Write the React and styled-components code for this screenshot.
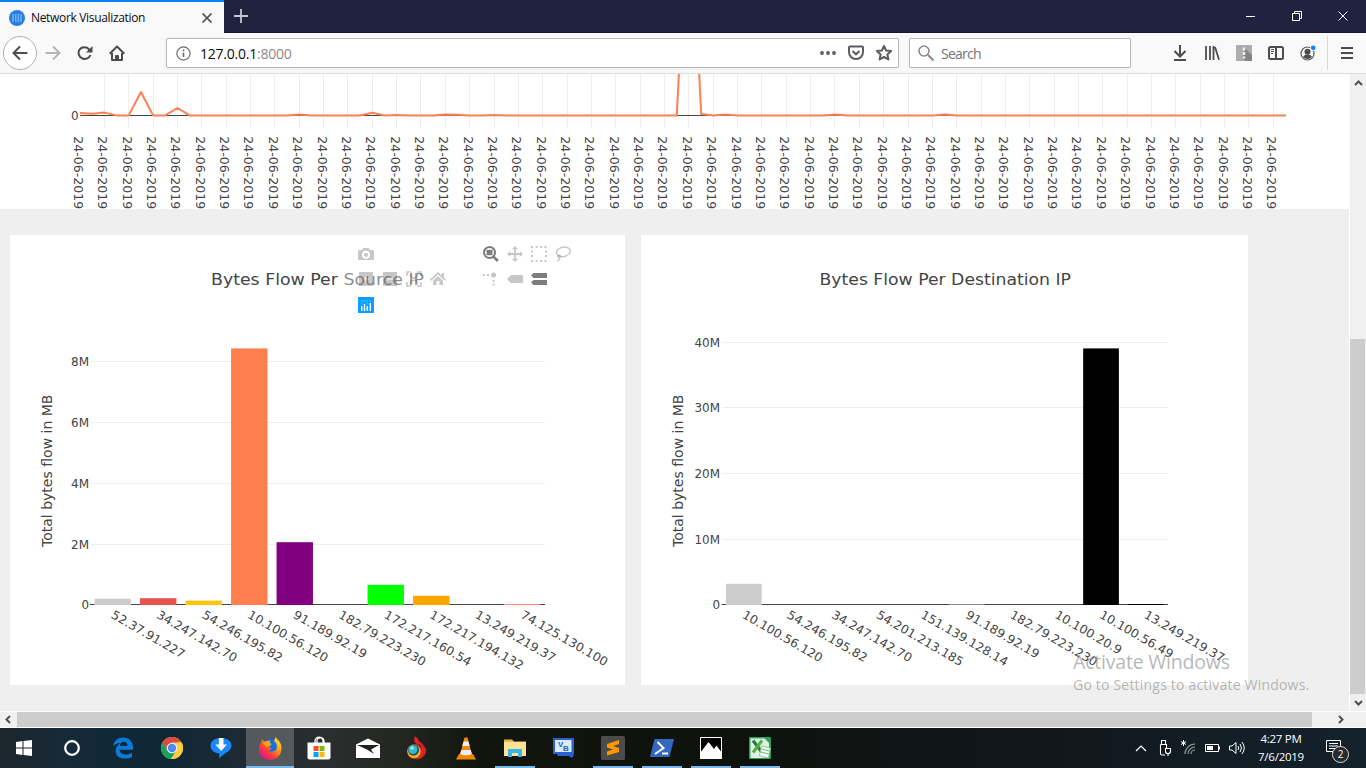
import React from "react";
import styled, { createGlobalStyle } from "styled-components";

const GlobalStyle = createGlobalStyle`
  * { box-sizing: border-box; }
  html, body { margin: 0; padding: 0; overflow: hidden; }
  svg { display: block; flex: none; }
`;

const ui = `"Open Sans", "Noto Sans", "Liberation Sans", sans-serif`;
const chartFont = `"DejaVu Sans", sans-serif`;

const Screen = styled.div`
  position: relative;
  width: 1366px;
  height: 768px;
  display: flex;
  flex-direction: column;
  background: #efefef;
  font-family: ${ui};
  overflow: hidden;
`;

/* ---------- browser chrome ---------- */

const TitleBar = styled.div`
  height: 33px;
  display: flex;
  background: #202340;
  border-bottom: 1px solid #14162c;
`;

const Tab = styled.div`
  width: 224px;
  height: 33px;
  display: flex;
  align-items: center;
  padding: 0 10px 0 9px;
  background: #f9f9fa;
  border-top: 2px solid #0a84ff;
`;

const TabTitle = styled.span`
  flex: 1;
  margin-left: 6px;
  font-size: 12px;
  letter-spacing: -0.33px;
  color: #0c0c0d;
  white-space: nowrap;
`;

const NewTab = styled.div`
  padding: 9px 0 0 10px;
  flex: 1;
`;

const WindowButtons = styled.div`
  display: flex;
  align-items: center;
`;

const WindowButton = styled.div`
  width: 46px;
  display: flex;
  justify-content: center;
`;

const Toolbar = styled.div`
  height: 41px;
  display: flex;
  align-items: center;
  background: #f9f9fa;
  border-bottom: 1px solid #dcdcde;
  padding-left: 3px;
`;

const BackButton = styled.div`
  width: 34px;
  height: 34px;
  border: 1px solid #b1b1b3;
  border-radius: 50%;
  background: #fff;
  display: flex;
  align-items: center;
  justify-content: center;
`;

const ToolIcon = styled.div`
  width: ${(p) => p.$w || 32}px;
  display: flex;
  justify-content: center;
`;

const ToolGroup = styled.div`
  display: flex;
  align-items: center;
  margin-left: 33px;
`;

const Field = styled.div`
  width: ${(p) => p.$w}px;
  height: 30px;
  margin-left: ${(p) => p.$ml}px;
  padding: 0 0 0 ${(p) => p.$pl}px;
  display: flex;
  align-items: center;
  background: #fff;
  border: 1px solid #b9b9bb;
  border-radius: 2px;
  box-shadow: 0 1px 4px rgba(0, 0, 0, 0.05);
`;

const FieldText = styled.span`
  flex: 1;
  margin-left: ${(p) => p.$ml}px;
  font-size: 14px;
  letter-spacing: ${(p) => p.$ls}px;
  color: ${(p) => p.$color};
  white-space: nowrap;
`;

const Port = styled.span`
  color: #8a8a8c;
`;

const Divider = styled.div`
  width: 1px;
  height: 34px;
  margin-left: 3px;
  background: #d7d7db;
`;

/* ---------- page ---------- */

const PageRow = styled.div`
  height: 637px;
  display: flex;
`;

const Page = styled.div`
  width: 1349px;
  height: 637px;
  overflow: hidden;
  background: #efefef;
`;

const TimelinePanel = styled.div`
  height: 135px;
  background: #fff;
  overflow: hidden;
`;

const Panels = styled.div`
  display: flex;
  gap: 16px;
  padding: 26px 0 0 10px;
`;

const Panel = styled.div`
  position: relative;
  width: ${(p) => p.$w}px;
  height: 450px;
  background: #fff;
`;

const ChartText = styled.text.attrs({ lengthAdjust: "spacingAndGlyphs" })`
  font-family: ${chartFont};
  font-size: ${(p) => p.$size || 12}px;
  fill: #444;
`;

const ModeBar = styled.div`
  position: absolute;
  left: 334px;
  top: 6px;
  width: 233px;
  display: flex;
  justify-content: space-between;
  padding-left: 10px;
  background: rgba(255, 255, 255, 0.4);
`;

const ModeGroup = styled.div`
  width: 98px;
`;

const ModeRow = styled.div`
  display: flex;
  height: 25.5px;
`;

const ModeIcon = styled.div`
  width: 24px;
  display: flex;
  align-items: center;
  justify-content: center;
  color: ${(p) => (p.$active ? "rgba(68, 68, 68, 0.7)" : "rgba(68, 68, 68, 0.3)")};
`;

const VScroll = styled.div`
  width: 17px;
  height: 637px;
  display: flex;
  flex-direction: column;
  align-items: center;
  background: #f0f0f0;
  border-left: 1px solid #fff;
  padding-top: 6px;
`;

const VThumb = styled.div`
  width: 15px;
  height: 355px;
  margin: 253px 1px 6px 0;
  background: #cdcdcd;
`;

const HScroll = styled.div`
  height: 17px;
  display: flex;
  align-items: center;
  background: #f0f0f0;
  border-top: 1px solid #fff;
  border-bottom: 1px solid #fff;
  padding-left: 4px;
`;

const HThumb = styled.div`
  width: 1295px;
  height: 15px;
  margin: 0 25px 0 5px;
  background: #cdcdcd;
`;

const Watermark = styled.div`
  position: absolute;
  left: 1073px;
  top: 649px;
  color: rgba(145, 145, 145, 0.66);
  white-space: nowrap;
`;

const WatermarkTitle = styled.div`
  font-size: 19.5px;
  line-height: 25px;
  letter-spacing: -0.2px;
`;

const WatermarkText = styled.div`
  font-size: 14px;
  line-height: 22px;
  letter-spacing: 0.2px;
`;

/* ---------- taskbar ---------- */

const Taskbar = styled.div`
  height: 40px;
  display: flex;
  background: linear-gradient(90deg, #1d262c 0, #152a38 70px, #0e2636 150px, #1c2a33 240px, #2a2e2e 330px, #242620 400px, #12150e 480px, #0e120c 720px, #10161a 1000px, #14222c 1366px);
`;

const Apps = styled.div`
  display: flex;
  margin-left: 2px;
`;

const Slot = styled.div`
  width: ${(p) => p.$w || 49}px;
  height: 40px;
  display: flex;
  align-items: center;
  justify-content: center;
  background: ${(p) => (p.$open ? "linear-gradient(#76b9ed, #76b9ed) center bottom / 40px 2px no-repeat" : "none")};
`;

const ActiveSlot = styled(Slot)`
  width: 48px;
  margin-left: 1px;
  background: #53595c;
  border-bottom: 2px solid #76b9ed;
  padding-top: 2px;
`;

const Tray = styled.div`
  display: flex;
  align-items: center;
  margin-left: auto;
  color: #fff;
`;

const TrayIcon = styled.div`
  width: 24px;
  display: flex;
  justify-content: center;
`;

const Clock = styled.div`
  width: 64px;
  margin-right: -1px;
  text-align: center;
  font-size: 11.5px;
  line-height: 18px;
  letter-spacing: -0.25px;
  white-space: nowrap;
`;

const Notice = styled.div`
  position: relative;
  width: 54px;
  height: 40px;
  padding: 12px 0 0 14px;
`;

const Badge = styled.div`
  position: absolute;
  left: 20px;
  top: 18px;
  width: 17px;
  height: 17px;
  border-radius: 50%;
  background: #252b2e;
  border: 1px solid #d5d5d5;
  font-size: 10px;
  line-height: 15px;
  text-align: center;
`;

/* ---------- charts ---------- */

const verdanaWidth = (s) =>
  [...s].reduce((w, c) => w + (c === "." ? 4.45 : 7.7), 0);

const bumps = { 0: 113, 1: 113.8, 2: 112.6, 5: 92, 8: 108, 18: 114.6, 24: 112.8, 26: 114.9, 30: 114.5, 31: 114.8, 34: 114.9, 50: -131, 51: 114, 53: 114.4, 62: 114.4, 71: 114.5 };

function Timeline() {
  const points = Array.from({ length: 100 }, (_, i) => `${80 + i * 12.18},${bumps[i] ?? 115.4}`).join(" ");
  return (
    <svg width="1349" height="135" viewBox="0 74 1349 135">
      {Array.from({ length: 49 }, (_, i) => (
        <rect key={i} x={Math.round(80 + (i + 1) * 24.353 - 0.5)} y="74" width="1" height="55" fill="#eee" />
      ))}
      <rect x="80" y="115" width="1206" height="1" fill="#444" />
      <polyline points={points} fill="none" stroke="coral" strokeWidth="2" strokeLinejoin="round" />
      <ChartText x="71" y="120">0</ChartText>
      {Array.from({ length: 50 }, (_, i) => (
        <ChartText key={i} textLength="73" transform={`translate(${Math.round(80 + i * 24.353) - 6.5},136.200) rotate(90)`}>
          24-06-2019
        </ChartText>
      ))}
    </svg>
  );
}

const sources = [
  ["52.37.91.227", 598.7, "#ccc"],
  ["34.247.142.70", 598.2, "#e55451"],
  ["54.246.195.82", 600.6, "#fdc60b"],
  ["10.100.56.120", 348.4, "#ff7f50"],
  ["91.189.92.19", 542.2, "purple"],
  ["182.79.223.230"],
  ["172.217.160.54", 584.8, "lime"],
  ["172.217.194.132", 595.8, "orange"],
  ["13.249.219.37"],
  ["74.125.130.100", 604, "#fa8072"],
];

const destinations = [
  ["10.100.56.120", 583.8, "#ccc"],
  ["54.246.195.82"],
  ["34.247.142.70"],
  ["54.201.213.185"],
  ["151.139.128.14"],
  ["91.189.92.19", 604, "#888"],
  ["182.79.223.230"],
  ["10.100.20.9"],
  ["10.100.56.49", 348.4, "#000"],
  ["13.249.219.37", 604, "#000"],
];

function BarChart({ left, width, x0, x1, title, titleX, titleW, labelX, axisX, ticks, bars }) {
  const pitch = (x1 - x0) / bars.length;
  return (
    <svg width={width} height="450" viewBox={`${left} 235 ${width} 450`}>
      {ticks.map(([label, y, w]) => (
        <g key={label}>
          {label !== "0" && <rect x={x0 + 1} y={y} width={x1 - x0 - 1} height="1" fill="#eee" />}
          <ChartText x={labelX - w} y={y + 4.7} textLength={w}>{label}</ChartText>
        </g>
      ))}
      <rect x={x0} y="604" width={x1 - x0} height="1" fill="#444" />
      {bars.map(([ip, top, fill], i) => (
        <g key={ip}>
          {top && <rect x={x0 + pitch * (i + 0.1)} y={top} width={pitch * 0.8} height={605 - top} fill={fill} />}
          <ChartText textLength={verdanaWidth(ip)} transform={`translate(${x0 + pitch * (i + 0.5) - 2.4},617.3) rotate(30)`}>
            {ip}
          </ChartText>
        </g>
      ))}
      <ChartText $size={16.5} x={titleX} y="285" textLength={titleW}>{title}</ChartText>
      <ChartText $size={14} textLength="152.500" transform={`translate(${axisX},547) rotate(-90)`}>
        Total bytes flow in MB
      </ChartText>
    </svg>
  );
}

const modeGlyphs = {
  camera: <path fillRule="evenodd" d="M1 4h3l1.500-2h5L12 4h3q1 0 1 1v8q0 1-1 1H1q-1 0-1-1V5q0-1 1-1zm7 .8a4 4 0 100 8 4 4 0 000-8zm0 1.900a2.100 2.100 0 110 4.200 2.100 2.100 0 010-4.200z" />,
  zoom: <g><path fillRule="evenodd" d="M6.500 0a6.500 6.500 0 015.300 10.200l4 3.800-1.800 2-4-4A6.500 6.500 0 116.500 0zm0 2a4.500 4.500 0 100 9 4.500 4.500 0 000-9z" /><path d="M3.500 3.800h6v5.400h-6z" /></g>,
  pan: <path d="M8 0l3 3.200H8.900V7.100h3.900V5L16 8l-3.200 3V8.900H8.900v3.900H11L8 16l-3-3.200h2.100V8.900H3.200V11L0 8l3.200-3v2.100h3.900V3.200H5z" />,
  select: <path fill="none" stroke="currentColor" strokeWidth="2" strokeDasharray="2 2.500" d="M0 1h16M0 15h16M1 4.500v8M15 4.500v8" />,
  lasso: <g fill="none" stroke="currentColor" strokeWidth="1.400"><ellipse cx="8.500" cy="6" rx="7" ry="4.700" transform="rotate(-12 8 6)" /><path d="M3 9c-1 2 1 3 2 2s0-2-1-1.500M4.500 11.500c.5 2-1 3-2.500 3.500" /></g>,
  zoomIn: <path fillRule="evenodd" d="M1 1h14v14H1zM7.500 5v2.500H5v1h2.500V11h1V8.500H11v-1H8.500V5z" />,
  zoomOut: <path fillRule="evenodd" d="M1 1h14v14H1zM5 7.500v1h6v-1z" />,
  auto: <path fill="none" stroke="currentColor" strokeWidth="1.600" d="M1 5V1h4M11 1h4v4M15 11v4h-4M5 15H1v-4M4 4l8 8M12 4l-8 8" />,
  home: <path d="M8 1l3.700 3.500V2H14v4.700L16 8.600l-1.200 1.200L8 3.400 1.200 9.800 0 8.600zM8 5l5 4.700V14H9.500v-4h-3v4H3V9.700z" />,
  spike: <g><circle cx="10.500" cy="4" r="2.500" /><path d="M0 3h2v2H0zM4 3h2v2H4zM9.500 9h2v2h-2zM9.500 12.500h2v2h-2z" /></g>,
  closest: <path d="M0 8l4-4h11q1 0 1 1v6q0 1-1 1H4z" />,
  compare: <path d="M0 4.500L2.500 2H16v5H2.500zM0 11.500L2.500 9H16v5H2.500z" />,
};

const Glyph = ({ name, active }) => (
  <ModeIcon $active={active}>
    <svg width="16" height="16" viewBox="0 0 16 16" fill="currentColor">{modeGlyphs[name]}</svg>
  </ModeIcon>
);

function PlotModeBar() {
  return (
    <ModeBar>
      <ModeGroup>
        <ModeRow><Glyph name="camera" /></ModeRow>
        <ModeRow><Glyph name="zoomIn" /><Glyph name="zoomOut" /><Glyph name="auto" /><Glyph name="home" /></ModeRow>
        <ModeRow>
          <ModeIcon>
            <svg width="16" height="16" viewBox="0 0 16 16">
              <path fill="#119dff" d="M0 0h16v16H0z" />
              <path stroke="#fff" strokeWidth="1.400" d="M3.700 9v5M6.500 7v7M9.300 9v5M12.300 6v8" />
              <path stroke="#19d3f3" strokeWidth="1.400" strokeDasharray="1.400 1.200" d="M3.700 3v4M6.500 3v3M9.300 3v4M12.300 3v2" />
            </svg>
          </ModeIcon>
        </ModeRow>
      </ModeGroup>
      <ModeGroup>
        <ModeRow><Glyph name="zoom" active /><Glyph name="pan" /><Glyph name="select" /><Glyph name="lasso" /></ModeRow>
        <ModeRow><Glyph name="spike" /><Glyph name="closest" /><Glyph name="compare" active /></ModeRow>
      </ModeGroup>
    </ModeBar>
  );
}

/* ---------- icons ---------- */

const Line = ({ w = 16, h = w, box, color = "#4c4c4f", sw = 2, d, children, ...rest }) => (
  <svg width={w} height={h} viewBox={box || `0 0 ${w} ${h}`} fill="none" stroke={color} strokeWidth={sw} {...rest}>
    {d && <path d={d} />}
    {children}
  </svg>
);

const apps = [
  {
    id: "edge",
    icon: (
      <svg width="22" height="22" viewBox="0 0 22 22">
        <path fill="#0a7bd8" d="M1 9.500C2 3.500 6 .5 11 .5c6 0 10 4 10 10v2.300H7.600c.2 3.200 2.500 4.700 6 4.700 2.500 0 4.500-.7 6.400-1.800v4.400c-2 1-4.500 1.500-7.300 1.500C7 21.600 3.600 18.500 3.600 14c0-3.600 2-6.300 5-8C5 6 2.500 7.500 1 9.500zM7.700 9h7.800c0-2.700-1.400-4.200-3.800-4.200C9.500 4.800 8 6.500 7.700 9z" />
      </svg>
    ),
  },
  {
    id: "chrome",
    icon: (
      <svg width="22" height="22" viewBox="0 0 22 22">
        <circle cx="11" cy="11" r="11" fill="#ffcd42" />
        <path fill="#dd4b3e" d="M1.500 5.500A11 11 0 0120.500 5.500H11l-4.700 8z" />
        <path fill="#16a15f" d="M1.500 5.500A11 11 0 0010 22l5.500-8.500L11 16l-4.700-2.500z" />
        <path fill="#ffcd42" d="M20.500 5.500A11 11 0 0110 22l5.700-8.500L16 5.500z" />
        <circle cx="11" cy="11" r="5.300" fill="#f4f4f4" />
        <circle cx="11" cy="11" r="4.200" fill="#4a8af4" />
      </svg>
    ),
  },
  {
    id: "downloader",
    icon: (
      <svg width="22" height="22" viewBox="0 0 22 22">
        <path fill="#1788fb" d="M11 1c6 0 10.500 3 10.500 7.500 0 4-4 6.500-6 7.500-2 1.500-4 3-6.500 5.500l.5-5C4 16 .5 13 .5 8.500S5 1 11 1z" />
        <path fill="#fff" d="M8.800 1h4.700v6.500h3.500L11.200 14 5.300 7.500h3.500z" />
      </svg>
    ),
  },
  {
    id: "firefox",
    active: true,
    icon: (
      <svg width="23" height="23" viewBox="0 0 23 23">
        <defs>
          <linearGradient id="fox" x1=".9" y1=".1" x2=".2" y2=".9">
            <stop offset="0" stopColor="#ffe226" /><stop offset=".35" stopColor="#ff9a16" />
            <stop offset=".7" stopColor="#ff3b3c" /><stop offset="1" stopColor="#e31587" />
          </linearGradient>
        </defs>
        <circle cx="12" cy="10.500" r="8.500" fill="#1a6fe0" />
        <path fill="url(#fox)" d="M3 2l2.500 3C7 3.500 9 4 9.500 4L11 3l-.5 3 2 1c.5 1-2 1.500-2 2.500-.5 1.500 1 2 2.500 1.500-1 2-3 2.500-4 2 1.500 2.500 7 2.500 8.500-1 1-3 0-6-2.500-8C16 3 16 1 16.500 0c1 2 3 3 4.500 5.500 3.500 6 1 17-9.500 17.500C3 23 0 17 0 12.500 0 9 1 7 2 6z" />
        <path fill="#ffb30f" d="M4 6c2-2 4-2 5.500-2L11 3l-.5 3 2 1c0 1-2 1-2 2l-3 1z" opacity=".7" />
      </svg>
    ),
  },
  {
    id: "store",
    icon: (
      <svg width="24" height="24" viewBox="0 0 24 24">
        <path fill="none" stroke="#fff" strokeWidth="1.300" d="M8 8V5c0-5 8-5 8 0v3M10 7V4.500c0-3.500 7-3.500 7 .5v2" />
        <path fill="#fff" d="M.5 6.500h23v15q0 2-2 2h-19q-2 0-2-2z" />
        <path fill="#f25022" d="M6.500 10h5v5h-5z" /><path fill="#7fba00" d="M12.500 10h5v5h-5z" />
        <path fill="#00a4ef" d="M6.500 16h5v5h-5z" /><path fill="#ffb900" d="M12.500 16h5v5h-5z" />
      </svg>
    ),
  },
  {
    id: "mail",
    icon: (
      <svg width="24" height="20" viewBox="0 0 24 20">
        <path fill="#fff" d="M0 6.500L12 .5l12 6V20H0z" />
        <path fill="#20231f" d="M1 7h22l-8 4.500 3 4.500-6.500-4.200z" />
      </svg>
    ),
  },
  {
    id: "torch",
    icon: (
      <svg width="22" height="24" viewBox="0 0 22 24">
        <path fill="#e01f26" d="M9 .5c-1.500 3 0 4.500 3 6 3 2 4 6 3 9.500-1 4-3 6-5 7.500 5 0 10-3.500 10-9 0-4-4-6-7-8.500C11 4 12 2 9 .5z" />
        <path fill="#e01f26" d="M9 .5c-1.500 3-1 6 2 8l7 1c-2-3-6-4-6-7z" />
        <circle cx="8.500" cy="15.500" r="7.500" fill="#c93a26" /><circle cx="8" cy="15.500" r="6.600" fill="#f0b02b" />
        <circle cx="7.500" cy="14" r="5.500" fill="#174f58" /><circle cx="7" cy="13.500" r="4.500" fill="#35b9cb" />
        <circle cx="6" cy="12" r="1.700" fill="#a9e9ee" />
      </svg>
    ),
  },
  {
    id: "vlc",
    icon: (
      <svg width="20" height="23" viewBox="0 0 20 23">
        <path fill="#f18500" d="M3 17h14l3 5.500H0z" />
        <path fill="#f28a12" d="M8.500.5h3L16 18q-6 3-12 0z" />
        <path fill="#eee" d="M7.500 4.500h5l1.200 4.500H6.300zM5.300 13h9.400l1.200 4q-6 2.500-11.800 0z" />
      </svg>
    ),
  },
  {
    id: "explorer",
    open: true,
    icon: (
      <svg width="22" height="20" viewBox="0 0 22 20">
        <path fill="#e8b647" d="M0 1.500h8l2 2h12v3H0z" />
        <path fill="#ffe394" d="M0 4h22v14H0z" />
        <path fill="#39b6e9" d="M4 12q0-1 1-1h12q1 0 1 1v7h-4v-4H8v4H4z" />
      </svg>
    ),
  },
  {
    id: "vb",
    icon: (
      <svg width="22" height="20" viewBox="0 0 22 20">
        <path fill="#2862cf" d="M0 0h21v16H0zM18 14l3 3-2 3-3-2H5l-1-2h14z" />
        <path fill="#dbe9f9" d="M2 2h16.500v12H2z" />
        <text x="5" y="9" fontSize="8" fontWeight="700" fontFamily="Liberation Sans" fill="#1c62ae">V</text>
        <text x="10" y="12.500" fontSize="8" fontWeight="700" fontFamily="Liberation Sans" fill="#1c62ae">B</text>
      </svg>
    ),
  },
  {
    id: "sublime",
    open: true,
    icon: (
      <svg width="24" height="24" viewBox="0 0 24 24">
        <rect width="24" height="24" rx="1.500" fill="#4b4b4b" />
        <path fill="#ff9800" d="M6 8l12-4v4l-6 2 6 2v4L6 19.500v-4l6-2-6-2z" />
      </svg>
    ),
  },
  {
    id: "powershell",
    open: true,
    icon: (
      <svg width="24" height="18" viewBox="0 0 24 18">
        <path fill="#3467bf" d="M4.500 0H24l-4.500 18H0z" />
        <path fill="none" stroke="#fff" strokeWidth="2" d="M7.500 3l6 6L5 15M12 14.500h6" />
      </svg>
    ),
  },
  {
    id: "photos",
    open: true,
    icon: (
      <svg width="22" height="22" viewBox="0 0 22 22">
        <path fill="#000" stroke="#fff" d="M.5.500h21v21H.5z" />
        <path fill="#fff" d="M0 16L8.500 5l5.500 7 2.500-3.500L22 16v6H0z" />
      </svg>
    ),
  },
  {
    id: "excel",
    open: true,
    icon: (
      <svg width="22" height="22" viewBox="0 0 22 22">
        <rect width="22" height="22" rx="1" fill="#2f9e58" />
        <path fill="#dff1e0" d="M1.500 1.500h14L20 6v15H1.500z" />
        <path stroke="#257a3c" strokeWidth="3" d="M4 3.500l9 12" /><path stroke="#55ad45" strokeWidth="3" d="M13 3.500l-9 12" />
        <path fill="#f4faf4" stroke="#7fb98f" strokeWidth=".8" d="M12.500 9l9 2-2 10-9-2z" />
        <path stroke="#4ca468" strokeWidth=".8" d="M12.500 12l8 2M12 15l8 2" />
      </svg>
    ),
  },
];

export default function App() {
  return (
    <Screen>
      <GlobalStyle />
      <TitleBar>
        <Tab>
          <svg width="16" height="16" viewBox="0 0 16 16">
            <circle cx="8" cy="8" r="8" fill="#2480e5" />
            <path stroke="#75b0ee" strokeWidth="1.500" d="M4 4v8M6.700 4v8M9.400 4v8M12 4v8" />
          </svg>
          <TabTitle>Network Visualization</TabTitle>
          <Line w={14} d="M2.500 2.500l9 9M11.500 2.500l-9 9" sw={1.700} />
        </Tab>
        <NewTab><Line w={14} d="M7 0v14M0 7h14" color="#c5c6d2" sw={1.800} /></NewTab>
        <WindowButtons>
          <WindowButton><Line w={10} d="M0 5.500h9" color="#fff" sw={1} /></WindowButton>
          <WindowButton><Line w={10} d="M.5 2.500h7v7h-7zM2.500 2.500v-2h7v7h-2" color="#fff" sw={1} /></WindowButton>
          <WindowButton><Line w={10} d="M.5.5l9 9M9.500.5l-9 9" color="#fff" sw={1} /></WindowButton>
        </WindowButtons>
      </TitleBar>
      <Toolbar>
        <BackButton><Line w={16} d="M15.500 8H1.500M8 1.500L1.500 8 8 14.500" /></BackButton>
        <ToolIcon><Line w={16} d="M.5 8h14M8 1.500L14.500 8 8 14.500" color="#b5b5b7" /></ToolIcon>
        <ToolIcon>
          <Line w={16} d="M13.500 10A6 6 0 112 5.500a6 6 0 0110.500-.500"><path fill="#4c4c4f" stroke="none" d="M15.500 1v6.500H9z" /></Line>
        </ToolIcon>
        <ToolIcon><Line w={16} d="M.7 8.700L8 1.500l7.300 7.200M3 8v7h10V8M7 15v-4h2v4" strokeLinejoin="round" /></ToolIcon>
        <Field $w={733} $ml={33} $pl={9}>
          <Line w={15} sw={1.200} color="#6a6a6c"><circle cx="7.500" cy="7.500" r="6.600" /><path d="M7.500 6.500v4.500M7.500 3.500v1.700" strokeWidth="1.600" /></Line>
          <FieldText $ml={9} $ls={-0.23} $color="#0c0c0d">127.0.0.1<Port>:8000</Port></FieldText>
          <ToolIcon $w={28}>
            <svg width="16" height="4" fill="#5c5c5f"><circle cx="2" cy="2" r="1.900" /><circle cx="8" cy="2" r="1.900" /><circle cx="14" cy="2" r="1.900" /></svg>
          </ToolIcon>
          <ToolIcon $w={28}><Line w={16} d="M2 1.500h12q1 0 1 1V7c0 4-3 7-7 7S1 11 1 7V2.500q0-1 1-1zM4.500 6L8 9.300 11.500 6" color="#5c5c5f" /></ToolIcon>
          <ToolIcon $w={28}><Line w={18} box="-1 -1 18 18" d="M8 1l2.100 4.500 5 .6-3.700 3.400 1 4.900L8 12l-4.400 2.400 1-4.900L.9 6.100l5-.6z" color="#5c5c5f" strokeLinejoin="round" /></ToolIcon>
        </Field>
        <Field $w={222} $ml={10} $pl={8}>
          <Line w={16} d="M10 10l5.500 5.500" color="#88888a"><circle cx="6" cy="6" r="5" strokeWidth="1.600" /></Line>
          <FieldText $ml={7} $ls={-0.75} $color="#737373">Search</FieldText>
        </Field>
        <ToolGroup>
          <ToolIcon><Line w={16} d="M8 0v11M2.500 6L8 11.500 13.500 6M2 15h12" /></ToolIcon>
          <ToolIcon><Line w={16} d="M2 1v14M6 1v14M9.500 1v14M11 2l4 12.700" sw={1.800} /></ToolIcon>
          <ToolIcon>
            <svg width="16" height="16"><path fill="#adadad" d="M0 0h16v16H0z" /><path fill="#858585" d="M9 3l7 7v6H9l-2-3z" /><path stroke="#eee" strokeWidth="2.500" strokeDasharray="3 1.500" d="M8 2.500v11" /></svg>
          </ToolIcon>
          <ToolIcon><Line w={16} d="M2.500 2h11q1.500 0 1.500 1.500v9q0 1.500-1.500 1.500h-11Q1 14 1 12.500v-9Q1 2 2.500 2zM8 2v12"><path strokeWidth="1" d="M3 4.500h3M3 6.500h3M3 8.500h2" /></Line></ToolIcon>
          <ToolIcon>
            <svg width="16" height="16" viewBox="0 0 16 16"><circle cx="7.500" cy="8.500" r="6.500" fill="none" stroke="#59595c" strokeWidth="1.200" /><circle cx="7.500" cy="6.700" r="3" fill="#4c4c4f" /><path fill="#4c4c4f" d="M3 12q1-2.500 4.500-2.500T12 12q-4.500 4-9 0z" /><circle cx="13" cy="3" r="3" fill="#f9f9fa" /><circle cx="13.200" cy="2.800" r="2.400" fill="#0a84ff" /></svg>
          </ToolIcon>
          <Divider />
          <ToolIcon $w={38}><Line w={12} h={14} d="M.5 2h11M.5 7h11M.5 12h11" strokeLinecap="round" /></ToolIcon>
        </ToolGroup>
      </Toolbar>

      <PageRow>
        <Page>
          <TimelinePanel><Timeline /></TimelinePanel>
          <Panels>
            <Panel $w={615}>
              <BarChart
                left={10} width={615} x0={90} x1={545}
                title="Bytes Flow Per Source IP" titleX={211} titleW={213}
                labelX={89} axisX={52} bars={sources}
                ticks={[["8M", 361, 18], ["6M", 422, 18], ["4M", 483, 18], ["2M", 544, 18], ["0", 604, 7.6]]}
              />
              <PlotModeBar />
            </Panel>
            <Panel $w={607}>
              <BarChart
                left={641} width={607} x0={721.5} x1={1168}
                title="Bytes Flow Per Destination IP" titleX={819.5} titleW={251.5}
                labelX={720} axisX={683} bars={destinations}
                ticks={[["40M", 342, 25.5], ["30M", 407, 25.5], ["20M", 473, 25.5], ["10M", 539, 25.5], ["0", 604, 7.6]]}
              />
            </Panel>
          </Panels>
        </Page>
        <VScroll>
          <Line w={9} h={6} d="M1 5l3.500-3.500L8 5" color="#505050" />
          <VThumb />
          <Line w={9} h={6} d="M1 1l3.500 3.500L8 1" color="#505050" />
        </VScroll>
      </PageRow>
      <HScroll>
        <Line w={8} h={9} d="M6 1L2.500 4.500 6 8" color="#505050" />
        <HThumb />
        <Line w={8} h={9} d="M2 1l3.500 3.500L2 8" color="#505050" />
      </HScroll>

      <Taskbar>
        <Slot $w={48}>
          <svg width="16" height="16" fill="#fff"><path d="M0 2l6.500-1v6.500H0zM7.500.9L16 0v7.500H7.500zM0 8.500h6.500V15L0 14zM7.500 8.500H16V16l-8.500-1z" /></svg>
        </Slot>
        <Slot $w={48}><Line w={16} color="#fff" sw={2.200}><circle cx="8" cy="8" r="6.800" /></Line></Slot>
        <Apps>
          {apps.map((a) =>
            a.active ? <ActiveSlot key={a.id}>{a.icon}</ActiveSlot> : <Slot key={a.id} $open={a.open}>{a.icon}</Slot>
          )}
        </Apps>
        <Tray>
          <TrayIcon><Line w={12} h={8} d="M1 7l5-5 5 5" color="#fff" sw={1.200} /></TrayIcon>
          <TrayIcon><Line w={14} h={16} d="M2.500 4.500h6v4M2.500 4.500v9q0 1.500 1.500 1.500h3M3.500 4.500v-4h4v4M7.500 8.500h5v3q0 2-2.500 2t-2.500-2zM10 13.500V16" color="#fff" sw={1.100} /></TrayIcon>
          <TrayIcon>
            <Line w={18} h={16} color="#999" sw={1.200}>
              <path d="M5 14a10 10 0 0110-10M8 14a7 7 0 017-7M11 14a4 4 0 014-4" />
              <path stroke="#fff" strokeWidth="1" d="M3.500 0v6M1 1.500l5 3M6 1.500l-5 3" />
            </Line>
          </TrayIcon>
          <TrayIcon><Line w={16} h={10} d="M.5 1.500h13v7H.5zM14.500 3.500v3" color="#fff" sw={1}><path fill="#fff" stroke="none" d="M2 3h6v4H2z" /></Line></TrayIcon>
          <TrayIcon><Line w={16} h={14} d="M.5 5h2.500l4-3.500v11L3 9H.5zM9 5q1.500 2 0 4M11 3q3 4 0 8M13 1q4.500 6 0 12" color="#fff" sw={1} /></TrayIcon>
          <Clock>4:27 PM<br />7/6/2019</Clock>
          <Notice>
            <Line w={16} h={16} d="M.5.500h14v11h-5l-2.500 3v-3h-6.500zM3 3.500h9M3 6h9M3 8.500h6" color="#fff" sw={1} />
            <Badge>2</Badge>
          </Notice>
        </Tray>
      </Taskbar>

      <Watermark>
        <WatermarkTitle>Activate Windows</WatermarkTitle>
        <WatermarkText>Go to Settings to activate Windows.</WatermarkText>
      </Watermark>
    </Screen>
  );
}
